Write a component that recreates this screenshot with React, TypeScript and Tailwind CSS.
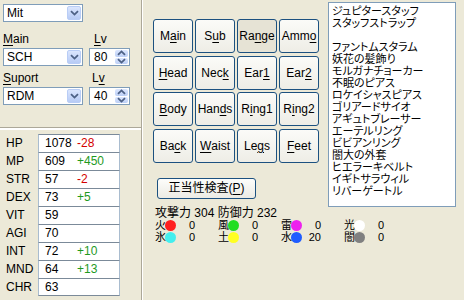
import React from 'react';

const FONT = "font-['Liberation_Sans','Noto_Sans_CJK_JP',sans-serif]";

const Chevron = ({ up = false }: { up?: boolean }) => (
    <svg width="9" height="6" viewBox="0 0 9 6" className={up ? 'rotate-180' : ''}>
        <path d="M1 1.2 L4.5 4.6 L8 1.2" fill="none" stroke="#4d6185" strokeWidth="1.8" />
    </svg>
);

const Combo = ({ value }: { value: string }) => (
    <div className="flex h-[18px] w-[80px] border border-[#7f9db9] bg-white">
        <span className="flex-1 pl-[3px] text-[12px] leading-[16px] text-black">{value}</span>
        <span className="m-px flex w-[14px] items-center justify-center rounded-[2px] border border-[#b9cdf6] bg-gradient-to-b from-[#dbe6fe] to-[#b7cbf5]">
            <Chevron />
        </span>
    </div>
);

const Spin = ({ value }: { value: string }) => (
    <div className="flex h-[18px] w-[41px] border border-[#7f9db9] bg-white">
        <span className="flex-1 pl-[4px] text-[12px] leading-[16px] text-black">{value}</span>
        <span className="m-px flex w-[13px] flex-col gap-px">
            <span className="flex flex-1 items-center justify-center rounded-[2px] bg-gradient-to-b from-[#dbe6fe] to-[#bccff6]">
                <Chevron up />
            </span>
            <span className="flex flex-1 items-center justify-center rounded-[2px] bg-gradient-to-b from-[#dbe6fe] to-[#bccff6]">
                <Chevron />
            </span>
        </span>
    </div>
);

// label with one underlined mnemonic letter
const Mn = ({ text, at }: { text: string; at: number }) => (
    <>
        {text.slice(0, at)}
        <span className="underline decoration-1 underline-offset-[2px]">{text[at]}</span>
        {text.slice(at + 1)}
    </>
);

const stats = [
    { k: 'HP', v: '1078', d: '-28', up: false },
    { k: 'MP', v: '609', d: '+450', up: true },
    { k: 'STR', v: '57', d: '-2', up: false },
    { k: 'DEX', v: '73', d: '+5', up: true },
    { k: 'VIT', v: '59', d: '', up: true },
    { k: 'AGI', v: '70', d: '', up: true },
    { k: 'INT', v: '72', d: '+10', up: true },
    { k: 'MND', v: '64', d: '+13', up: true },
    { k: 'CHR', v: '63', d: '', up: true },
];

const slots: { t: string; at: number }[] = [
    { t: 'Main', at: 1 }, { t: 'Sub', at: 1 }, { t: 'Range', at: 2 }, { t: 'Ammo', at: 3 },
    { t: 'Head', at: 0 }, { t: 'Neck', at: 3 }, { t: 'Ear1', at: 3 }, { t: 'Ear2', at: 3 },
    { t: 'Body', at: 0 }, { t: 'Hands', at: 3 }, { t: 'Ring1', at: 1 }, { t: 'Ring2', at: 1 },
    { t: 'Back', at: 2 }, { t: 'Waist', at: 0 }, { t: 'Legs', at: 2 }, { t: 'Feet', at: 0 },
];

const gear = [
    'ジュピタースタッフ', 'スタッフストラップ', '', 'ファントムスタラム', '妖花の髪飾り',
    'モルガナチョーカー', '不眠のピアス', 'ロケイシャスピアス', 'ゴリアードサイオ',
    'アギュトブレーサー', 'エーテルリング', 'ビビアンリング', '闇大の外套',
    'ヒエラーキベルト', 'イギトサラウィル', 'リバーゲートル',
];

const elements = [
    { k: '火', c: 'bg-[#ff1f1f]', v: '0' },
    { k: '風', c: 'bg-[#22dd22]', v: '0' },
    { k: '雷', c: 'bg-[#ee22ee]', v: '0' },
    { k: '光', c: 'bg-white', v: '0' },
    { k: '氷', c: 'bg-[#44eeee]', v: '0' },
    { k: '土', c: 'bg-[#ffff22]', v: '0' },
    { k: '水', c: 'bg-[#1f5cff]', v: '20' },
    { k: '闇', c: 'bg-[#808080]', v: '0' },
];

export default function App() {
    return (
        <div className={`flex h-[300px] w-[464px] overflow-hidden bg-[#ece9d8] text-[12px] text-black ${FONT}`}>
            {/* left panel */}
            <div className="flex w-[141px] flex-col">
                <div className="h-[130px] border-b-2 border-b-white pl-[3px] pt-[4px] shadow-[inset_0_-1px_0_#aca899]">
                    <Combo value="Mit" />
                    <div className="mt-[10px] flex h-[14px] leading-[14px]">
                        <span className="w-[91px]"><Mn text="Main" at={0} /></span>
                        <span><Mn text="Lv" at={0} /></span>
                    </div>
                    <div className="mt-[2px] flex gap-[6px]">
                        <Combo value="SCH" />
                        <Spin value="80" />
                    </div>
                    <div className="mt-[5px] flex h-[14px] leading-[14px]">
                        <span className="w-[89px]"><Mn text="Suport" at={0} /></span>
                        <span><Mn text="Lv" at={1} /></span>
                    </div>
                    <div className="mt-[2px] flex gap-[6px]">
                        <Combo value="RDM" />
                        <Spin value="40" />
                    </div>
                </div>
                <div className="pl-[6px] pt-[4px]">
                    {stats.map((s, i) => (
                        <div key={s.k} className="flex h-[18px]">
                            <span className="w-[32px] leading-[18px]">{s.k}</span>
                            <div className={`flex w-[82px] border-x border-t border-x-[#a9bccf] border-t-[#7b8a99] bg-white pl-[6px] leading-[17px] ${i === stats.length - 1 ? 'border-b border-b-[#7b8a99]' : ''}`}>
                                <span className="w-[32px]">{s.v}</span>
                                <span className={s.up ? 'text-[#1f9a1f]' : 'text-[#d40000]'}>{s.d}</span>
                            </div>
                        </div>
                    ))}
                </div>
            </div>

            {/* splitter */}
            <div className="w-[2px] border-l border-r border-l-[#aca899] border-r-white" />
            <div className="w-[5px]" />

            {/* right panel */}
            <div className="flex flex-1 flex-col">
                <div className="flex h-[207px]">
                    <div className="w-[180px] pl-[5px] pt-[19px]">
                        <div className="grid grid-cols-[repeat(4,40px)] gap-x-[2px] gap-y-[2.5px]">
                            {slots.map((s) => (
                                <div
                                    key={s.t}
                                    className={`flex h-[34px] items-center justify-center rounded-[3px] border border-[#1c5180] ${s.t === 'Range' ? 'bg-[#e6e3d5]' : 'bg-gradient-to-b from-[#fbfbf8] to-[#eeede6]'}`}
                                >
                                    <Mn text={s.t} at={s.at} />
                                </div>
                            ))}
                        </div>
                        <div className="ml-[4px] mt-[15px] flex h-[21px] w-[99px] items-center justify-center rounded-[3px] border border-[#1c5180] bg-gradient-to-b from-[#fdfdfb] to-[#ecebe4]">
                            正当性検査(<span className="underline decoration-1 underline-offset-[2px]">P</span>)
                        </div>
                    </div>
                    <div className="mt-[2px] h-[205px] w-[128px] border border-[#7f9db9] bg-white pl-[3px] pt-[2px] text-[11px] [font-feature-settings:'palt']">
                        {gear.map((g, i) => (
                            <div key={i} className="h-[12px] overflow-hidden whitespace-nowrap leading-[12px]">{g}</div>
                        ))}
                    </div>
                </div>
                <div className="pl-[7px] text-[11px] leading-[12px]">
                    <div className="h-[12px] text-[12px]">攻撃力 304 防御力 232</div>
                    <div className="grid grid-cols-[repeat(4,63px)]">
                        {elements.map((e) => (
                            <div key={e.k} className="flex h-[12px] items-center">
                                <span className="w-[11px]">{e.k}</span>
                                <span className={`-ml-px h-[11px] w-[11px] rounded-full ${e.c}`} />
                                <span className="w-[19px] text-right">{e.v}</span>
                            </div>
                        ))}
                    </div>
                </div>
            </div>
        </div>
    );
}
